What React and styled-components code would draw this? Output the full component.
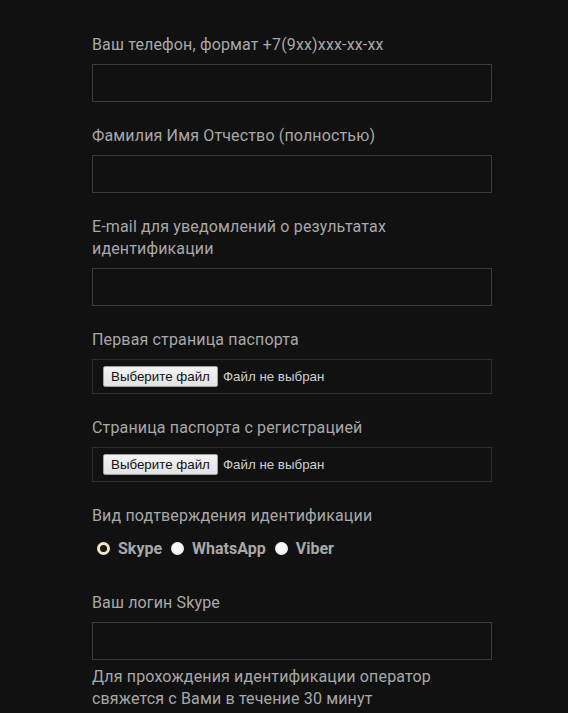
import React from 'react';
import styled, { createGlobalStyle } from 'styled-components';

const GlobalStyle = createGlobalStyle`
  html, body {
    margin: 0;
    padding: 0;
    background: #111111;
  }
  body {
    font-family: Roboto, "Noto Sans", Arial, sans-serif;
  }
`;

const Form = styled.form`
  width: 400px;
  padding: 34px 0 0 92px;
  display: flex;
  flex-direction: column;
`;

const Field = styled.div`
  display: flex;
  flex-direction: column;
  gap: 8px;
  margin-bottom: ${({ $gap }) => $gap || 23}px;
`;

const Label = styled.label`
  color: #a8a8a8;
  font-size: 16px;
  line-height: 22px;
  letter-spacing: 0.15px;
`;

const TextInput = styled.input`
  box-sizing: border-box;
  width: 400px;
  height: 38px;
  background: #111111;
  border: 1px solid #3c3c3c;
  color: #ccc;
  font-size: 16px;
  outline: none;
  padding: 0 10px;
`;

const FileBox = styled.div`
  box-sizing: border-box;
  width: 400px;
  height: 35px;
  border: 1px solid #2e2e2e;
  display: flex;
  align-items: center;
  padding-left: 10px;
  gap: 5px;
  font-family: "Liberation Sans", Arial, sans-serif;
  font-size: 13.33px;
`;

const FileButton = styled.button`
  box-sizing: border-box;
  height: 21px;
  padding: 0 7px;
  background: linear-gradient(#f4f4f4, #e2e2e2);
  border: 1px solid #a0a0a0;
  border-radius: 2px;
  color: #111;
  font-family: inherit;
  font-size: 13.33px;
`;

const FileStatus = styled.span`
  color: #cfcfcf;
`;

const RadioRow = styled.div`
  display: flex;
  align-items: center;
  height: 30px;
  padding-left: 5px;
  margin-top: 6px;
  margin-bottom: 29px;
`;

const RadioOption = styled.label`
  display: flex;
  align-items: center;
  gap: 8px;
  margin-right: 9px;
  color: #a8a8a8;
  font-weight: 700;
  font-size: 16px;
`;

const RadioDot = styled.span`
  box-sizing: border-box;
  width: 13px;
  height: 13px;
  border-radius: 50%;
  background: ${({ $checked }) => ($checked ? '#1a1a1a' : '#f7f7f7')};
  border: ${({ $checked }) => ($checked ? '3px solid #f2e6c4' : 'none')};
  box-shadow: ${({ $checked }) => ($checked ? 'inset 0 0 0 1px #111' : 'none')};
`;

const Note = styled.p`
  margin: -2px 0 0;
  color: #a8a8a8;
  font-size: 16px;
  line-height: 22px;
  letter-spacing: 0.15px;
`;

const TextField = ({ label }) => (
  <Field>
    <Label>{label}</Label>
    <TextInput type="text" />
  </Field>
);

const FileField = ({ label }) => (
  <Field>
    <Label>{label}</Label>
    <FileBox>
      <FileButton type="button">Выберите файл</FileButton>
      <FileStatus>Файл не выбран</FileStatus>
    </FileBox>
  </Field>
);

const App = () => {
  const options = ['Skype', 'WhatsApp', 'Viber'];

  return (
    <>
      <GlobalStyle />
      <Form>
        <TextField label="Ваш телефон, формат +7(9xx)xxx-xx-xx" />
        <TextField label="Фамилия Имя Отчество (полностью)" />
        <TextField label={<>E-mail для уведомлений о результатах<br />идентификации</>} />
        <FileField label="Первая страница паспорта" />
        <FileField label="Страница паспорта с регистрацией" />

        <Label>Вид подтверждения идентификации</Label>
        <RadioRow>
          {options.map((name, i) => (
            <RadioOption key={name}>
              <RadioDot $checked={i === 0} />
              {name}
            </RadioOption>
          ))}
        </RadioRow>

        <Field $gap={8}>
          <Label>Ваш логин Skype</Label>
          <TextInput type="text" />
        </Field>

        <Note>
          Для прохождения идентификации оператор<br />
          свяжется с Вами в течение 30 минут
        </Note>
      </Form>
    </>
  );
};

export default App;
